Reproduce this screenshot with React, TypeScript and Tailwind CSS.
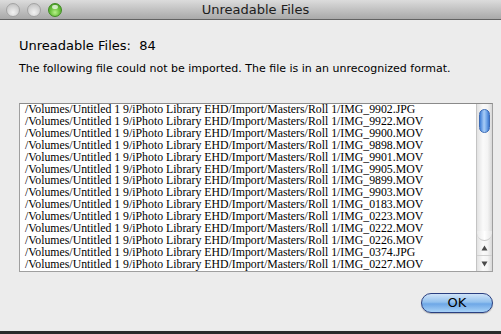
import React from 'react';

const files = [
  'IMG_9902.JPG',
  'IMG_9922.MOV',
  'IMG_9900.MOV',
  'IMG_9898.MOV',
  'IMG_9901.MOV',
  'IMG_9905.MOV',
  'IMG_9899.MOV',
  'IMG_9903.MOV',
  'IMG_0183.MOV',
  'IMG_0223.MOV',
  'IMG_0222.MOV',
  'IMG_0226.MOV',
  'IMG_0374.JPG',
  'IMG_0227.MOV',
];

const prefix = '/Volumes/Untitled 1 9/iPhoto Library EHD/Import/Masters/Roll 1/';

function TrafficLight({ green }: { green?: boolean }) {
  return green ? (
    <div className="w-[14px] h-[14px] rounded-full border border-[#3f8a22] bg-[radial-gradient(circle_at_50%_70%,#b8f08a_0%,#6cc23e_45%,#3c8f1f_100%)] relative">
      <div className="absolute left-[3px] top-[1px] w-[6px] h-[4px] rounded-full bg-white/70" />
    </div>
  ) : (
    <div className="w-[14px] h-[14px] rounded-full border border-[#a3a3a3] bg-[radial-gradient(circle_at_50%_70%,#f2f2f2_0%,#d6d6d6_50%,#b9b9b9_100%)]" />
  );
}

function Scrollbar() {
  return (
    <div className="w-[16px] h-full border-l border-[#c4c4c4] bg-[linear-gradient(to_right,#e2e2e2,#fafafa_40%,#f4f4f4_70%,#d8d8d8)] flex flex-col">
      <div className="flex-1 pt-[5px] flex flex-col items-center">
        <div className="w-[11px] h-[24px] rounded-full border border-[#3c6bb5] bg-[linear-gradient(to_right,#3f7fd8,#a9cdf6_45%,#78acec_70%,#3d78cf)]" />
        <div className="flex-1" />
        <div className="w-[15px] h-[10px] rounded-b-full border-b border-[#c9c9c9] bg-[linear-gradient(to_right,#e8e8e8,#ffffff_50%,#e6e6e6)]" />
      </div>
      <div className="h-[15px] flex items-center justify-center border-b border-[#d0d0d0]">
        <svg width="7" height="6" viewBox="0 0 7 6"><path d="M3.5 0.5 L6.5 5.5 L0.5 5.5 Z" fill="#4a4a4a" /></svg>
      </div>
      <div className="h-[15px] flex items-center justify-center">
        <svg width="7" height="6" viewBox="0 0 7 6"><path d="M0.5 0.5 L6.5 0.5 L3.5 5.5 Z" fill="#4a4a4a" /></svg>
      </div>
    </div>
  );
}

export default function App() {
  return (
    <div className="w-[501px] h-[334px] flex flex-col bg-[#ececec] overflow-hidden font-['DejaVu_Sans','Liberation_Sans',sans-serif] text-black">
      {/* title bar */}
      <div className="h-[20px] grid grid-cols-[1fr_auto_1fr] items-center border-b border-[#626262] bg-[linear-gradient(to_bottom,#dcdcdc,#bdbdbd_60%,#a9a9a9)]">
        <div className="flex items-center gap-[7px] pl-[6px]">
          <TrafficLight />
          <TrafficLight />
          <TrafficLight green />
        </div>
        <div className="text-[13px] leading-[16px] text-[#1c1c1c] pl-[10px]">Unreadable Files</div>
        <div />
      </div>

      <div className="flex-1 flex flex-col px-[19px] pr-[8px]">
        <div className="mt-[18px] text-[13px] leading-[16px]">Unreadable Files:&nbsp; 84</div>
        <div className="mt-[8px] text-[11px] leading-[14px]">
          The following file could not be imported. The file is in an unrecognized format.
        </div>

        <div className="mt-[27px] h-[169px] flex bg-white border border-[#9f9f9f] border-t-[#8a8a8a]">
          <div className="flex-1 overflow-hidden pl-[5px] font-['Liberation_Serif',serif] text-[11.8px] leading-[11.9px] whitespace-nowrap">
            {files.map((f) => (
              <div key={f}>{prefix + f}</div>
            ))}
          </div>
          <Scrollbar />
        </div>

        <div className="mt-[21px] flex justify-end">
          <button className="w-[72px] h-[20px] rounded-full border border-[#2a3f80] bg-[linear-gradient(to_bottom,#cfe3f8,#93c1ee_45%,#6ea7e6_55%,#a8d2f7)] text-[13px] leading-[18px] shadow-[0_1px_1px_rgba(0,0,0,0.25)]">
            OK
          </button>
        </div>
      </div>

      <div className="h-[3px] bg-[#2b2b2b]" />
    </div>
  );
}
